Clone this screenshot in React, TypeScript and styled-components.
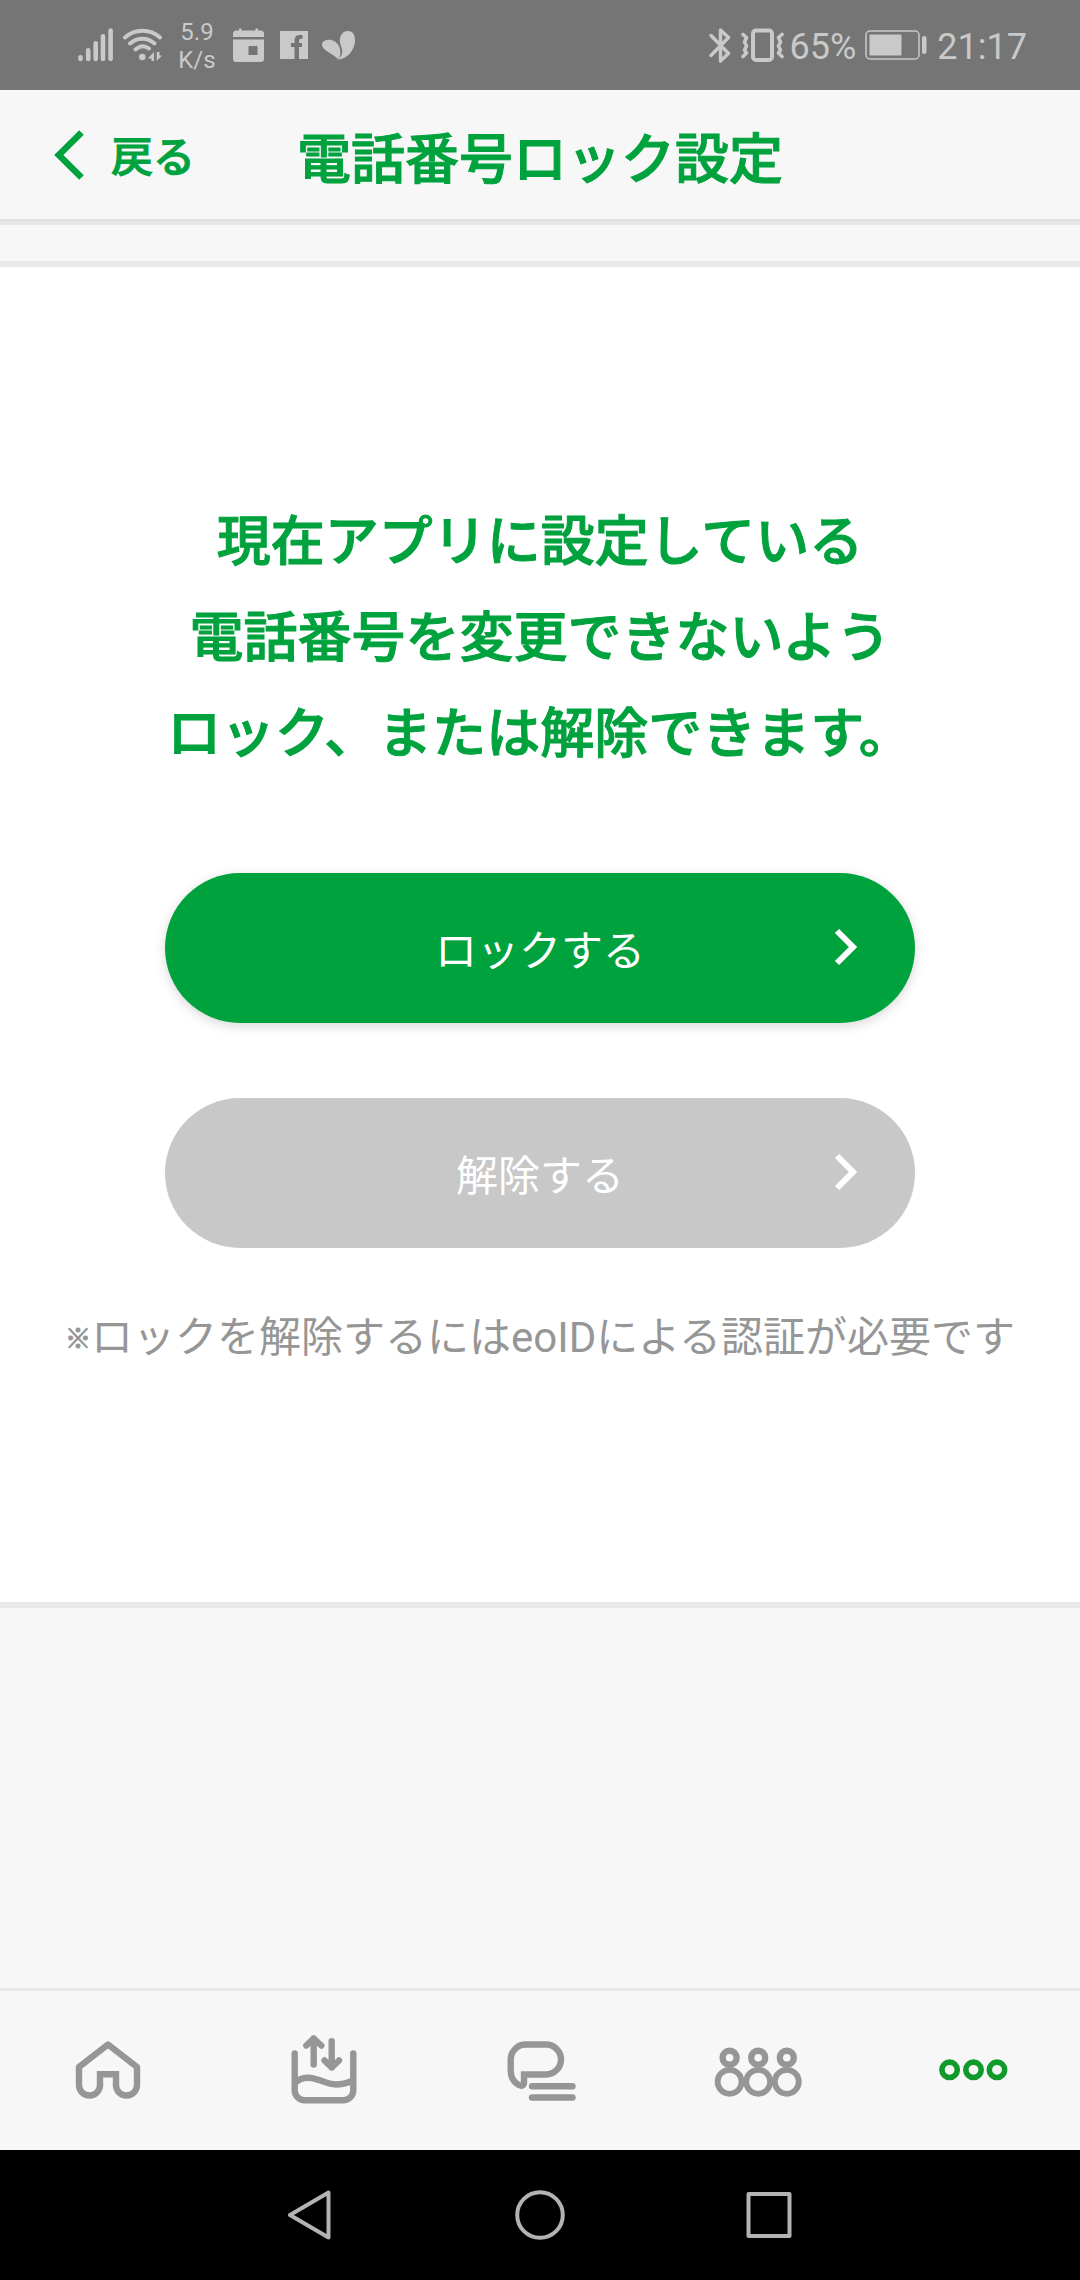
import React from "react";
import styled, { createGlobalStyle } from "styled-components";

const GREEN = "#00a23e";
const GREY = "#969696";
const STATUS = "#c9c9c9";

const GlobalStyle = createGlobalStyle`
  *, *::before, *::after { box-sizing: border-box; }
  html, body, #root { height: 100%; }
  body {
    margin: 0;
    background: #f7f7f7;
    font-family: Roboto, "Noto Sans CJK JP", sans-serif;
  }
  button { font: inherit; border: 0; padding: 0; background: none; cursor: pointer; }
  svg { display: block; flex: none; }
`;

const Screen = styled.div`
  display: flex;
  flex-direction: column;
  min-height: 100%;
`;

const StatusBar = styled.div`
  display: flex;
  justify-content: space-between;
  height: 90px;
  padding: 0 53px 0 78px;
  background: #757575;
  color: ${STATUS};
`;

const StatusGroup = styled.div`
  display: flex;
  align-items: center;
`;

const StatusItem = styled.div<{ $gap?: number }>`
  margin-left: ${(p) => p.$gap ?? 0}px;
`;

const Speed = styled.div`
  margin-left: 16px;
  padding-top: 1px;
  width: 38px;
  font-size: 24px;
  line-height: 28px;
  text-align: center;
`;

const StatusText = styled.div<{ $gap: number }>`
  margin-left: ${(p) => p.$gap}px;
  font-size: 36px;
  line-height: 40px;
  padding-top: 3px;
`;

const Header = styled.header`
  display: grid;
  grid-template-columns: 1fr auto 1fr;
  align-items: center;
  height: 129px;
`;

const BackButton = styled.button`
  display: flex;
  align-items: center;
  justify-self: start;
  gap: 27px;
  margin-left: 54px;
  color: ${GREEN};
  font-size: 42px;
  line-height: 56px;
  font-weight: 500;
`;

const BackLabel = styled.span`
  padding-top: 6px;
  -webkit-text-stroke: 1px currentColor;
`;

const Title = styled.h1`
  margin: 0;
  color: ${GREEN};
  font-size: 54px;
  line-height: 72px;
  font-weight: 500;
  -webkit-text-stroke: 1px currentColor;
  padding-top: 12px;
`;

const HeaderEdge = styled.div`
  height: 6px;
  background: linear-gradient(#dedede, #eaeaea);
`;

const Main = styled.main`
  flex: 1;
  padding: 36px 0;
`;

const Card = styled.section`
  display: flex;
  flex-direction: column;
  align-items: center;
  padding: 228px 0 234px;
  border: solid #e9e9e9;
  border-width: 6px 0;
  background: #fff;
`;

const Lead = styled.p`
  margin: 0 0 90px;
  color: ${GREEN};
  font-size: 54px;
  line-height: 96px;
  font-weight: 500;
  -webkit-text-stroke: 1px currentColor;
  text-align: center;
`;

const Actions = styled.div`
  display: flex;
  flex-direction: column;
  gap: 75px;
  width: 100%;
  max-width: 750px;
`;

const ActionButton = styled.button`
  display: grid;
  grid-template-columns: 1fr auto 1fr;
  align-items: center;
  height: 150px;
  padding: 0 57px;
  border-radius: 75px;
  background: ${GREEN};
  box-shadow: 0 3px 12px rgba(0, 0, 0, 0.16);
  color: #fff;
  font-size: 42px;
  line-height: 60px;

  &:disabled {
    background: #c8c8c8;
    box-shadow: none;
    cursor: default;
  }
`;

const ActionLabel = styled.span`
  grid-column: 2;
  padding-top: 8px;
`;

const ActionArrow = styled.svg`
  justify-self: end;
`;

const Note = styled.p`
  margin: 60px 0 0;
  color: ${GREY};
  font-size: 42px;
  line-height: 60px;
  text-align: center;
`;

const NoteMark = styled.span`
  font-size: 26px;
  line-height: 1;
  font-weight: 700;
  vertical-align: 4px;
  -webkit-text-stroke: 1px currentColor;
`;

const TabBar = styled.nav`
  display: grid;
  grid-template-columns: repeat(5, 1fr);
  height: 162px;
  border-top: 3px solid #e9e9e9;
`;

const Tab = styled.button<{ $active?: boolean }>`
  display: flex;
  align-items: center;
  justify-content: center;
  color: ${(p) => (p.$active ? "#0f9a2b" : GREY)};
`;

const SystemNav = styled.nav`
  display: flex;
  align-items: center;
  justify-content: center;
  gap: 179px;
  height: 130px;
  background: #000;
  color: #b3b3b3;
`;

function TabIcon({ children, width = 6.4 }: { children: React.ReactNode; width?: number }) {
  return (
    <svg width="96" height="80" viewBox="0 0 96 80" fill="none" stroke="currentColor" strokeWidth={width} strokeLinecap="round" strokeLinejoin="round" aria-hidden="true">
      {children}
    </svg>
  );
}

function Action({ label, disabled }: { label: string; disabled?: boolean }) {
  return (
    <ActionButton type="button" disabled={disabled}>
      <ActionLabel>{label}</ActionLabel>
      <ActionArrow width="24" height="42" viewBox="0 0 24 42" fill="none" stroke="currentColor" strokeWidth="6" aria-hidden="true">
        <path d="M3 4L19 20L3 36" />
      </ActionArrow>
    </ActionButton>
  );
}

export default function App() {
  return (
    <Screen>
      <GlobalStyle />
      <StatusBar>
        <StatusGroup>
          <StatusItem>
            <svg width="35" height="34" viewBox="0 0 35 34" stroke={STATUS} strokeWidth="4.6" strokeLinecap="round">
              <path d="M2.5 29.3V31M10.2 22.3V31M17.7 15.3V31M25 8.3V31M32.6 2.5V31" />
            </svg>
          </StatusItem>
          <StatusItem $gap={10}>
            <svg width="39" height="34" viewBox="0 0 39 34" fill="none" stroke={STATUS} strokeWidth="4" strokeLinecap="round">
              <path d="M2 9.500C12 .500 27 .500 37 9.500M7 15.500C14.500 9 24.500 9 31.500 15.500M12.500 21.500C17 17.500 22 17.500 26 20.500" />
              <circle cx="19.300" cy="29" r="3.300" fill={STATUS} stroke="none" />
              <path d="M31 24V33H28.500V30.500H24.700ZM33.700 24V33L39 27.500H36.500V24Z" fill={STATUS} stroke="none" />
            </svg>
          </StatusItem>
          <Speed>5.9 K/s</Speed>
          <StatusItem $gap={16}>
            <svg width="33" height="35" viewBox="0 0 33 35" fill={STATUS}>
              <path d="M1 9V6Q1 2.500 4 2.500H7V.500H9.500V2.500H23.500V.500H26V2.500H29Q32 2.500 32 6V9Z" />
              <path fillRule="evenodd" d="M1 11.500H32V31Q32 34 29 34H4Q1 34 1 31ZM16.500 18V27H25.500V18Z" />
            </svg>
          </StatusItem>
          <StatusItem $gap={15}>
            <svg width="28" height="28" viewBox="0 0 28 28">
              <path fill={STATUS} fillRule="evenodd" d="M0 0H28V28H0ZM14.500 28H19V16H22V12H19V10Q19 7.700 21 7.700H22.500V4H19.500Q14.500 4 14.500 9.500V12H11V16H14.500Z" />
            </svg>
          </StatusItem>
          <StatusItem $gap={14}>
            <svg width="33" height="29" viewBox="0 0 33 29" fill={STATUS}>
              <path d="M16 28.500C13 23 0 20 0 13.500C0 10 5 8.300 9 9C16 10.300 20 18 17.800 25.500Z" />
              <path d="M16 28.500C20 25 21.500 21 19 15C16 8 19 0 26 0C31 0 33 4 33 9C33 19 25 28.500 16 28.500Z" />
            </svg>
          </StatusItem>
        </StatusGroup>
        <StatusGroup>
          <StatusItem>
            <svg width="22" height="35" viewBox="0 0 22 35" fill="none" stroke={STATUS} strokeWidth="3.400" strokeLinejoin="round" strokeLinecap="round">
              <path d="M2 7.500L19.500 25.500L11.500 33V2L19.500 9.500L2 27.500" />
            </svg>
          </StatusItem>
          <StatusItem $gap={10}>
            <svg width="43" height="34" viewBox="0 0 43 34" fill="none" stroke={STATUS} strokeWidth="3.600" strokeLinecap="round" strokeLinejoin="round">
              <rect x="12" y="2.500" width="19" height="29.500" rx="3" strokeWidth="4" />
              <path d="M2 6.500L5.500 9.500L3.500 14L5.500 18L3.500 22L5.500 25L2 28.500M41 6.500L37.500 9.500L39.500 14L37.500 18L39.500 22L37.500 25L41 28.500" />
            </svg>
          </StatusItem>
          <StatusText $gap={6}>65%</StatusText>
          <StatusItem $gap={9}>
            <svg width="62" height="30" viewBox="0 0 62 30">
              <rect x="1" y="1" width="53" height="28" rx="4" fill="none" stroke={STATUS} strokeWidth="1.500" />
              <rect x="4.500" y="4.500" width="32" height="21" rx="1" fill={STATUS} />
              <rect x="57" y="6" width="4.500" height="18" rx="2" fill={STATUS} />
            </svg>
          </StatusItem>
          <StatusText $gap={10}>21:17</StatusText>
        </StatusGroup>
      </StatusBar>

      <Header>
        <BackButton type="button">
          <svg width="30" height="50" viewBox="0 0 30 50" fill="none" stroke="currentColor" strokeWidth="6.500" aria-hidden="true">
            <path d="M27.500 2.500L4.800 25L27.500 47.500" />
          </svg>
          <BackLabel>戻る</BackLabel>
        </BackButton>
        <Title>電話番号ロック設定</Title>
      </Header>
      <HeaderEdge />

      <Main>
        <Card>
          <Lead>
            現在アプリに設定している
            <br />
            電話番号を変更できないよう
            <br />
            ロック、または解除できます。
          </Lead>
          <Actions>
            <Action label="ロックする" />
            <Action label="解除する" disabled />
          </Actions>
          <Note>
            <NoteMark>※</NoteMark>ロックを解除するにはeoIDによる認証が必要です
          </Note>
        </Card>
      </Main>

      <TabBar>
        <Tab type="button" aria-label="ホーム">
          <TabIcon>
            <path d="M56 54a10.500 10.500 0 0 0 21 0V36L48 13.500L19 36V54a10.500 10.500 0 0 0 21 0" />
            <path d="M40 54V43.200H56V54" strokeLinejoin="miter" />
          </TabIcon>
        </Tab>
        <Tab type="button" aria-label="データ">
          <TabIcon>
            <path d="M18.700 22.500V59.200a10 10 0 0 0 10 10H67.300a10 10 0 0 0 10-10V22.500" />
            <path d="M20 51C24 47.500 28 46.800 32.300 46.800C42 46.800 50 53.500 60 53.500C66 53.500 71 52 76 50" />
            <path d="M37.700 33.500V7.500M30.300 14.500L37.700 7.500L45.300 14.500M55.700 10.200V36.500M48.500 29.500L55.700 36.500L63 29.500" />
          </TabIcon>
        </Tab>
        <Tab type="button" aria-label="トーク">
          <TabIcon>
            <path strokeLinejoin="miter" d="M32 50V43.500H54a15 15 0 0 0 0-30H33.700a15 15 0 0 0-15 15V40c0 7 3.500 11.500 8.500 14.200c2.500 1.200 4.800 0 4.800-2.500V43.500" />
            <path d="M40 55.200H80.500M40 66.500H80.500" />
          </TabIcon>
        </Tab>
        <Tab type="button" aria-label="コミュニティ">
          <TabIcon>
            {[21.6, 50.2, 78.8].map((x) => (
              <g key={x}>
                <circle cx={x} cy="26.800" r="7" />
                <circle cx={x} cy="50.800" r="12" strokeWidth="5.800" />
              </g>
            ))}
          </TabIcon>
        </Tab>
        <Tab type="button" aria-label="その他" $active>
          <TabIcon width={5.6}>
            {[25.6, 49.5, 73].map((x) => (
              <circle key={x} cx={x} cy="38.800" r="7.700" />
            ))}
          </TabIcon>
        </Tab>
      </TabBar>

      <SystemNav>
        <svg width="50" height="50" viewBox="0 0 50 50" fill="none" stroke="currentColor" strokeWidth="4" strokeLinejoin="round">
          <path d="M42.500 2.500V47.500L4 25Z" />
        </svg>
        <svg width="50" height="50" viewBox="0 0 50 50" fill="none" stroke="currentColor" strokeWidth="4">
          <circle cx="25" cy="25" r="22.800" />
        </svg>
        <svg width="50" height="50" viewBox="0 0 50 50" fill="none" stroke="currentColor" strokeWidth="4" strokeLinejoin="round">
          <rect x="4.500" y="4" width="41" height="42" />
        </svg>
      </SystemNav>
    </Screen>
  );
}
